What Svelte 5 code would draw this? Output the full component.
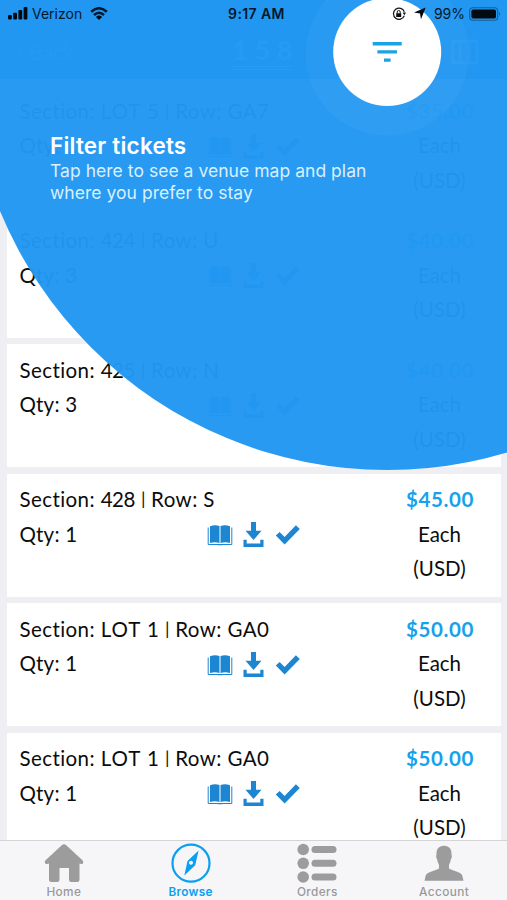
<script lang="ts">
	interface Ticket {
		section: string;
		row: string;
		qty: number;
		price: string;
	}

	const tickets: Ticket[] = [
		{ section: 'LOT 5', row: 'GA7', qty: 1, price: '$35.00' },
		{ section: '424', row: 'U', qty: 3, price: '$40.00' },
		{ section: '425', row: 'N', qty: 3, price: '$40.00' },
		{ section: '428', row: 'S', qty: 1, price: '$45.00' },
		{ section: 'LOT 1', row: 'GA0', qty: 1, price: '$50.00' },
		{ section: 'LOT 1', row: 'GA0', qty: 1, price: '$50.00' }
	];

	const tabs = ['Home', 'Browse', 'Orders', 'Account'];
	let active = $state('Browse');
</script>

<div class="screen">
	<header>
		<span class="back">‹ Back</span>
		<span class="logo">1 5 8</span>
		<svg class="map" width="28" height="30" viewBox="0 0 28 30">
			<path d="M2 4h24v22H2zM9 4v22M18 4v22" fill="none" stroke="#fff" stroke-width="3" />
		</svg>
	</header>

	<main>
		{#each tickets as ticket}
			<article>
				<div class="info">
					<p>
						Section: <span class="section" class:lot={ticket.section.startsWith('LOT')}>{ticket.section}</span>
						<i>|</i> Row: {ticket.row}
					</p>
					<div class="line">
						<p class="qty">Qty: {ticket.qty}</p>
						<div class="icons">
							<svg width="26" height="22" viewBox="0 0 26 22">
								<path d="M3 2.2Q8 .2 12.5 2v17Q8 17.6 3 19zM13.5 2Q18 .2 23 2.2V19Q18 17.6 13.5 19z" />
								<path d="M1.2 3.5v17H24.800V3.5" fill="none" stroke="#1d86d2" stroke-width="1" />
								<path d="M10.5 20q2.500 1.500 5 0v1.300h-5z" />
							</svg>
							<svg width="22" height="26" viewBox="0 0 22 26">
								<path d="M8 0h5v8.700h5.500L10.500 18 2.500 8.700H8zM.5 17.800h3.200v3.600h13.600v-3.600h3.200V25H.5z" />
							</svg>
							<svg width="26" height="22" viewBox="0 0 26 22">
								<path d="M.8 11.600l3.800-3.500 5 4.800L20.900 1.300l3.900 3.600L9.600 20.400z" />
							</svg>
						</div>
					</div>
				</div>
				<div class="cost">
					<strong>{ticket.price}</strong>
					<span>Each</span>
					<span>(USD)</span>
				</div>
			</article>
		{/each}
	</main>

	<nav>
		{#each tabs as tab}
			<button class:active={tab === active} onclick={() => (active = tab)}>
				<svg width="42" height="42" viewBox="0 0 42 42">
					{#if tab === 'Home'}
						<path
							d="M18.800 4.200Q21 2.400 23.200 4.200L39.500 19.300Q41.200 21 39.800 22.500Q38.500 23.500 36.500 22.600V38.500Q36.500 41 34 41H28.500Q26 41 26 38.500V27H16.500V38.500Q16.500 41 14 41H8.500Q6 41 6 38.500V22.600Q4 23.500 2.300 22.500Q.8 21 2.500 19.300z"
						/>
					{:else if tab === 'Browse'}
						<circle cx="21" cy="22.200" r="18.500" fill="none" stroke="#0b9ff0" stroke-width="2.200" />
						<path
							fill-rule="evenodd"
							d="M28.600 9.500L25.200 24.200 14.300 34.500 17.500 20zM21 19.700a2 2 0 1 0 .01 0z"
						/>
					{:else if tab === 'Orders'}
						{#each [8.5, 22.3, 36] as y}
							<circle cx="7.200" cy={y} r="5.800" />
							<rect x="15.500" y={y - 3.5} width="25" height="7" rx="3.500" />
						{/each}
					{:else}
						<path
							d="M21 4.800C26.500 4.800 28.800 8.500 28.500 13.500 29.300 15.500 28.500 17.200 28 18 27.500 21.500 26 23 26 24V27.500C31 30.500 38 31 39.300 34.500L40.500 39.800H1.500L2.700 34.500C4 31 11 30.500 16 27.500V24C16 23 14.500 21.500 14 18 13.500 17.200 12.700 15.500 13.500 13.500 13.200 8.500 15.500 4.800 21 4.800z"
						/>
					{/if}
				</svg>
				<span>{tab}</span>
			</button>
		{/each}
	</nav>

	<div class="overlay">
		<svg width="507" height="900" viewBox="0 0 507 900">
			<circle cx="387.200" cy="51" r="419" fill="#2297f2" fill-opacity=".972" />
			<circle cx="387.200" cy="54" r="81.500" fill="#fff" fill-opacity=".035" />
			<circle cx="387.200" cy="52" r="54" fill="#fff" />
			<path d="M372.700 42h29v3.400h-29zM377.400 50.200h19.600v3.400h-19.600zM384 58.400h6.600v3.400H384z" fill="#1aa3e8" />
		</svg>
		<div class="hint">
			<h1>Filter tickets</h1>
			<p>Tap here to see a venue map and plan</p>
			<p>where you prefer to stay</p>
		</div>
		<div class="status">
			<div class="carrier">
				<svg width="20" height="13" viewBox="0 0 20 13">
					<rect x="0" y="8" width="3.800" height="4.500" rx="1" />
					<rect x="5.200" y="5.800" width="3.800" height="6.700" rx="1" />
					<rect x="10.400" y="3" width="3.800" height="9.500" rx="1" />
					<rect x="15.600" y="0" width="3.800" height="12.500" rx="1" />
				</svg>
				<span>Verizon</span>
				<svg width="18" height="13" viewBox="0 0 18 13">
					<path d="M1.200 4.700Q9-2.200 16.800 4.700M4 8Q9 3.500 14 8" fill="none" stroke="#03172a" stroke-width="2.500" />
					<path d="M5.900 10Q9 7.200 12.100 10L9 12.900z" />
				</svg>
			</div>
			<span class="time">9:17 AM</span>
			<div class="power">
				<svg width="14" height="14" viewBox="0 0 14 14">
					<path d="M12.300 8.800A5.600 5.600 0 1 1 12.300 4.700" fill="none" stroke="#111" stroke-width="1.200" />
					<path d="M10.700 5.600h3.300l-1.700 2.600zM4.200 6.300h5v3.800h-5z" />
					<path d="M5.200 6.500V5a1.500 1.500 0 0 1 3 0v1.500" fill="none" stroke="#111" />
				</svg>
				<svg class="arrow" width="12" height="13" viewBox="0 0 12 13"><path d="M11.700.5L7 12.300 6 6.600 0 5.600z" /></svg>
				<span>99%</span>
				<svg width="32" height="14" viewBox="0 0 32 14">
					<rect x=".7" y=".7" width="28" height="12.600" rx="3.300" fill="none" stroke="#1b5c91" stroke-width="1.100" />
					<rect x="2.400" y="2.400" width="24.600" height="9.200" rx="1.800" />
					<path d="M30 5q2 2 0 4z" fill="#1b5c91" />
				</svg>
			</div>
		</div>
	</div>
</div>

<style>
	.screen {
		position: relative;
		width: 507px;
		height: 900px;
		overflow: hidden;
		display: flex;
		flex-direction: column;
		background: #efeff3;
		color: #0c0c0c;
		font-family: Lato, sans-serif;
	}

	p,
	h1 {
		margin: 0;
	}

	header {
		flex: none;
		height: 79px;
		box-sizing: border-box;
		padding: 24px 28px 0 18px;
		display: flex;
		align-items: center;
		justify-content: space-between;
		background: #0f80e0;
		color: #fff;
		font-size: 21px;

		.back {
			opacity: 0.6;
		}

		.logo {
			font-size: 27px;
			font-weight: 700;
			border-bottom: 4px double #fff;
			opacity: 0.85;
		}

		.map {
			opacity: 0.8;
		}
	}

	main {
		flex: 1;
		min-height: 0;
		overflow: hidden;
		padding: 6px 6px 0 7px;
		display: flex;
		flex-direction: column;
		gap: 6.5px;
	}

	article {
		flex: none;
		height: 123px;
		box-sizing: border-box;
		padding: 8.8px 11.5px 0 12.5px;
		display: flex;
		justify-content: space-between;
		background: #fff;
		font-size: 20.5px;
		line-height: 34.6px;

		.info {
			width: 300px;
			white-space: nowrap;
			letter-spacing: 0.42px;
		}

		.info p {
			height: 34.6px;
		}

		.section {
			letter-spacing: -0.5px;
			margin-right: 1px;
		}

		.section.lot {
			letter-spacing: 1px;
			margin-right: 0;
		}

		i {
			font-style: normal;
			font-size: 18px;
			line-height: 1;
			position: relative;
			top: -2px;
			margin: 0 -0.5px;
		}

		.line {
			display: flex;
			align-items: center;
		}

		.qty {
			width: 187px;
			letter-spacing: 0.2px;
		}

		.icons {
			display: flex;
			align-items: center;
			gap: 10.4px;
			padding-top: 2px;
			fill: #1d86d2;
		}

		.cost {
			width: 100px;
			display: flex;
			flex-direction: column;
			align-items: center;
		}

		strong {
			color: #14a2ed;
			letter-spacing: 0.6px;
			padding-left: 1px;
		}
	}

	nav {
		flex: none;
		height: 60px;
		box-sizing: border-box;
		border-top: 1px solid #d4d4d7;
		display: grid;
		grid-template-columns: repeat(4, 1fr);
		background: #f6f6f9;

		button {
			border: 0;
			padding: 0 0 0 1px;
			background: none;
			display: flex;
			flex-direction: column;
			align-items: center;
			color: #999;
			fill: #9c9c9c;
			font: 500 11.8px/14px Inter, sans-serif;
			letter-spacing: 0.4px;
		}

		.active {
			color: #0b9ff0;
			fill: #0b9ff0;
			font-weight: 600;
			letter-spacing: 0.25px;
		}

		span {
			margin-top: 2px;
		}
	}

	.overlay {
		position: absolute;
		inset: 0;
		font-family: Inter, sans-serif;

		> svg {
			display: block;
		}
	}

	.hint {
		position: absolute;
		left: 50px;
		top: 131px;
		color: #fff;
		white-space: nowrap;

		h1 {
			height: 29px;
			font-size: 22.5px;
			line-height: 29px;
			font-weight: 600;
			letter-spacing: 0.2px;
		}

		p {
			font-size: 17.5px;
			line-height: 21.6px;
			letter-spacing: 0.04px;
			color: #d9f0ff;
		}
	}

	.status {
		position: absolute;
		inset: 0 0 auto;
		height: 27px;
		box-sizing: border-box;
		padding: 0 6px 0 8px;
		display: grid;
		grid-template-columns: 1fr auto 1fr;
		align-items: center;
		font-size: 14px;
		color: #03172a;
		fill: #050a10;

		.carrier,
		.power {
			display: flex;
			align-items: center;
			gap: 4px;
		}

		.carrier span {
			margin-right: 4px;
		}

		.time {
			font-weight: 600;
			letter-spacing: 0.4px;
			padding-left: 4px;
		}

		.power {
			justify-content: flex-end;
		}

		.arrow {
			margin: 0 4px;
		}
	}
</style>
